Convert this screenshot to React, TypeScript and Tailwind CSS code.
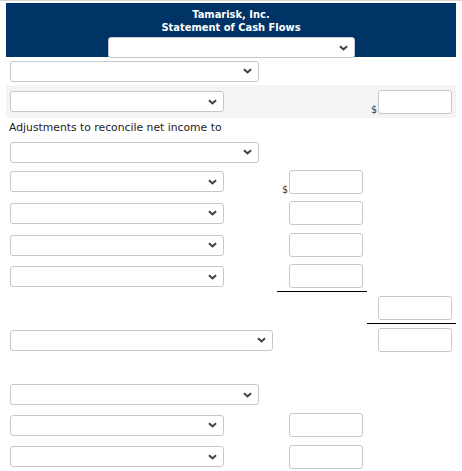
import React from "react";

const font = { fontFamily: '"DejaVu Sans Condensed", "DejaVu Sans", Tahoma, sans-serif' };

function Chevron() {
  return (
    <svg
      aria-hidden
      viewBox="0 0 10 6"
      className="pointer-events-none absolute right-[7px] top-1/2 h-[6px] w-[9px] -translate-y-1/2"
    >
      <path d="M1 1l4 3.5L9 1" fill="none" stroke="#444" strokeWidth="2.2" />
    </svg>
  );
}

function Select({ w }: { w: string }) {
  return (
    <div className={`relative h-[21px] ${w}`}>
      <select className="h-full w-full appearance-none rounded-[3px] border border-[#c8c8c8] bg-white" />
      <Chevron />
    </div>
  );
}

function Amount({ dollar }: { dollar?: boolean }) {
  return (
    <div className="flex items-end">
      {dollar && <span className="mb-[-1px] mr-[1px] text-[10px] leading-none text-[#333]">$</span>}
      <input className="h-[24px] w-[74px] rounded-[3px] border border-[#c8c8c8] bg-white" />
    </div>
  );
}

type RowProps = {
  h: string;
  select?: string;
  mid?: "amt" | "dollar";
  right?: "amt" | "dollar";
  midLine?: boolean;
  rightLine?: boolean;
  gray?: boolean;
};

function Row({ h, select, mid, right, midLine, rightLine, gray }: RowProps) {
  return (
    <div className={`grid grid-cols-[271px_90px_89px] ${h} ${gray ? "bg-[#f4f4f4]" : ""}`}>
      <div className="flex items-center pl-[4px]">{select && <Select w={select} />}</div>
      <div className={`flex items-center justify-end pr-[4px] ${midLine ? "border-b-[1.5px] border-black" : ""}`}>
        {mid && <Amount dollar={mid === "dollar"} />}
      </div>
      <div className={`flex items-center justify-end pr-[4px] ${rightLine ? "border-b-[1.5px] border-black" : ""}`}>
        {right && <Amount dollar={right === "dollar"} />}
      </div>
    </div>
  );
}

export default function App() {
  return (
    <div className="h-[471px] w-[462px] bg-white" style={font}>
      <div className="h-[2px] border-t border-[#d6d6d6]" />
      <div className="mx-[6px] mt-[1px] w-[450px]">
        <div className="flex h-[54px] flex-col items-center bg-[#003366] pt-[5px] text-[11px] font-bold leading-[13px] text-white">
          <div>Tamarisk, Inc.</div>
          <div>Statement of Cash Flows</div>
          <div className="mt-[3px]">
            <Select w="w-[247px]" />
          </div>
        </div>

        <Row h="h-[28px]" select="w-[249px]" />
        <Row h="h-[33px]" select="w-[214px]" right="dollar" gray />
        <div className="flex h-[20px] items-center pl-[3px] font-['DejaVu_Sans',sans-serif] text-[10.8px] text-[#222]">
          Adjustments to reconcile net income to
        </div>
        <Row h="h-[28px]" select="w-[249px]" />
        <Row h="h-[31px]" select="w-[214px]" mid="dollar" />
        <Row h="h-[32px]" select="w-[214px]" mid="amt" />
        <Row h="h-[32px]" select="w-[214px]" mid="amt" />
        <Row h="h-[31px]" select="w-[214px]" mid="amt" midLine />
        <Row h="h-[32px]" right="amt" rightLine />
        <Row h="h-[32px]" select="w-[263px]" right="amt" />
        <div className="h-[24px]" />
        <Row h="h-[29px]" select="w-[249px]" />
        <Row h="h-[32px]" select="w-[214px]" mid="amt" />
        <Row h="h-[31px]" select="w-[214px]" mid="amt" />
      </div>
    </div>
  );
}
